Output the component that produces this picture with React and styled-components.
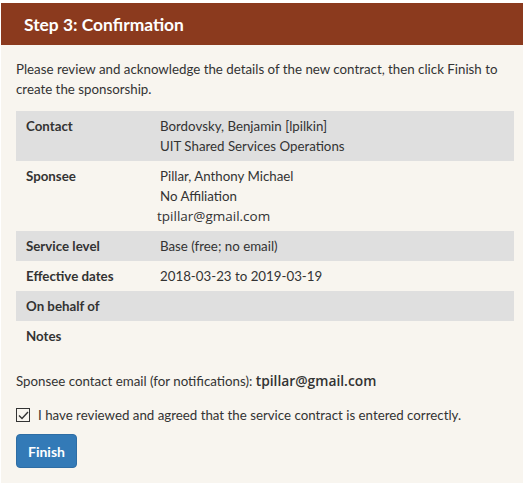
import React from "react";
import styled, { createGlobalStyle } from "styled-components";

const Global = createGlobalStyle`
  html, body { margin: 0; padding: 0; background: #ffffff; }
  body { font-family: Lato, "Noto Sans", sans-serif; color: #333; }
`;

const rows = [
  { label: "Contact", lines: ["Bordovsky, Benjamin [lpilkin]", "UIT Shared Services Operations"], shaded: true },
  { label: "Sponsee", lines: ["Pillar, Anthony Michael", "No Affiliation"], email: "tpillar@gmail.com" },
  { label: "Service level", lines: ["Base (free; no email)"], shaded: true },
  { label: "Effective dates", lines: ["2018-03-23 to 2019-03-19"] },
  { label: "On behalf of", lines: [], shaded: true },
  { label: "Notes", lines: [] },
];

function App() {
  return (
    <>
      <Global />
      <Panel>
        <Header>Step 3: Confirmation</Header>
        <Body>
          <Intro>
            Please review and acknowledge the details of the new contract, then click Finish to
            create the sponsorship.
          </Intro>
          <Table>
            {rows.map((r) => (
              <Row key={r.label} $shaded={r.shaded}>
                <Label>{r.label}</Label>
                <Value>
                  {r.lines.map((l) => (
                    <div key={l}>{l}</div>
                  ))}
                  {r.email && <Email>{r.email}</Email>}
                </Value>
              </Row>
            ))}
          </Table>
          <ContactLine>
            Sponsee contact email (for notifications): <Email as="span" $strong>tpillar@gmail.com</Email>
          </ContactLine>
          <Check>
            <Box>
              <svg width="11" height="9" viewBox="0 0 11 9">
                <path d="M1 4.5 L4 7.5 L10 1" fill="none" stroke="#333" strokeWidth="1.4" />
              </svg>
            </Box>
            I have reviewed and agreed that the service contract is entered correctly.
          </Check>
          <Button>Finish</Button>
        </Body>
      </Panel>
    </>
  );
}

const Panel = styled.div`
  margin: 3px 2px 0 1px;
  background: #f8f5ef;
  min-height: 480px;
`;

const Header = styled.div`
  background: #8b3a1e;
  color: #fff;
  font-weight: 700;
  font-size: 17.4px;
  height: 42px;
  display: flex;
  align-items: center;
  padding-left: 23px;
`;

const Body = styled.div`
  padding: 14px 9px 0 15px;
  font-size: 13.3px;
`;

const Intro = styled.p`
  margin: 0 0 12px;
  line-height: 20px;
`;

const Table = styled.div`
  display: flex;
  flex-direction: column;
`;

const Row = styled.div`
  display: grid;
  grid-template-columns: 134px 1fr;
  padding: 5px 10px;
  line-height: 20px;
  background: ${(p) => (p.$shaded ? "#dfdfdf" : "transparent")};
`;

const Label = styled.div`
  font-weight: 700;
`;

const Value = styled.div``;

const Email = styled.div`
  font-family: "Open Sans", sans-serif;
  font-size: ${(p) => (p.$strong ? "13.8px" : "13.5px")};
  font-weight: ${(p) => (p.$strong ? 600 : 400)};
  margin-left: ${(p) => (p.$strong ? "0" : "-3px")};
`;

const ContactLine = styled.div`
  margin-top: 20px;
  line-height: 20px;
`;

const Check = styled.label`
  display: flex;
  align-items: center;
  gap: 8px;
  margin-top: 14px;
  line-height: 20px;
`;

const Box = styled.span`
  width: 12px;
  height: 12px;
  border: 1px solid #333;
  display: inline-flex;
  align-items: center;
  justify-content: center;
`;

const Button = styled.button`
  margin-top: 9px;
  background: #337ab7;
  border: 1px solid #2e6da4;
  border-radius: 4px;
  color: #fff;
  font-family: Lato, sans-serif;
  font-size: 14px;
  font-weight: 700;
  padding: 0 11px;
  height: 34px;
`;

export default App;
